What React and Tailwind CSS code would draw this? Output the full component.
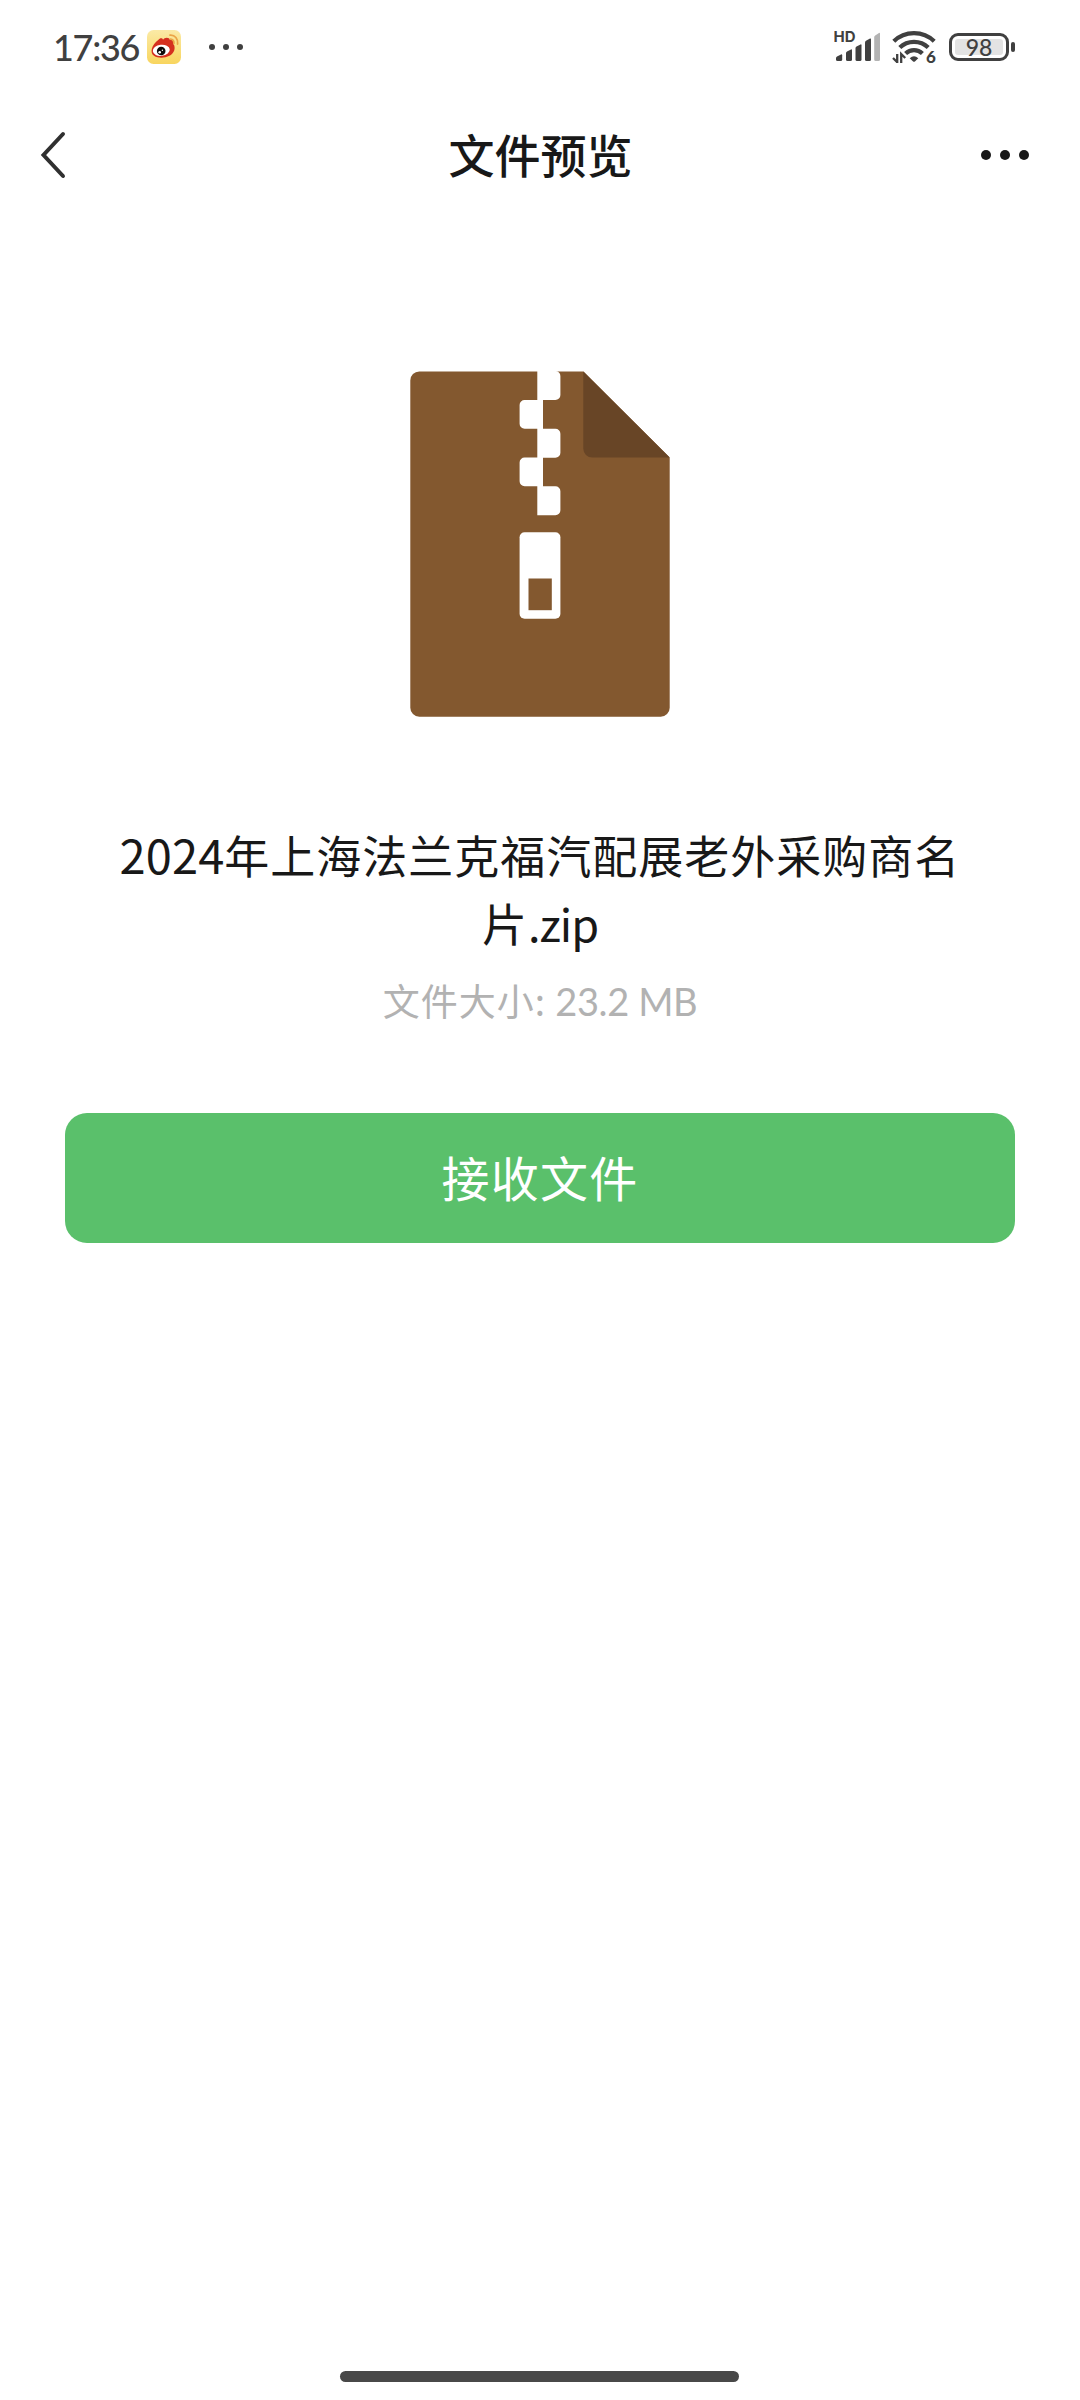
function WeiboIcon() {
  return (
    <svg className="w-[34px] h-[34px]" viewBox="0 0 34 34" fill="none">
      <defs>
        <linearGradient id="weibo-bg" x1="0" y1="0" x2="0" y2="34" gradientUnits="userSpaceOnUse">
          <stop stopColor="#fbeaa6" />
          <stop offset="1" stopColor="#f8d55e" />
        </linearGradient>
      </defs>
      <rect width="34" height="34" rx="6.5" fill="url(#weibo-bg)" />
      <path
        d="M11.5 9.8C12.5 8 15.5 7.5 16 9.8c1.5-2.8 6.5-2.8 7 .2 1.5-.5 4 .2 3.5 3-.2 1.200.4 1.700.8 2.600 1.200 4.600-1 8.200-4.800 10.200-5 2.600-11.500 2.700-15.500 0C2.500 22.800 4.500 15 11.500 9.800z"
        fill="#d5301f"
      />
      <ellipse cx="14.3" cy="20.3" rx="8.5" ry="5.6" fill="#fff" transform="rotate(-7 14.3 20.3)" />
      <circle cx="14.2" cy="21" r="4.3" fill="#0c0c0c" />
      <circle cx="12.7" cy="22.3" r="1.3" fill="#fff" />
      <circle cx="15.4" cy="20.3" r=".7" fill="#fff" />
      <path d="M23.5 9.200c2.200-.1 3.700 1.800 3.400 4.300" stroke="#eba548" strokeWidth="1.8" strokeLinecap="round" />
      <path d="M23 5.200c5-.4 8.200 3.600 7.600 8.800" stroke="#eba548" strokeWidth="1.8" strokeLinecap="round" />
    </svg>
  );
}

function SignalIcon() {
  return (
    <svg className="w-[48px] h-[50px]" viewBox="0 -8 48 50" fill="#404040">
      <text x="-.5" y="12" fontSize="14.5" fontWeight="700" textLength="22" lengthAdjust="spacingAndGlyphs" className="font-['Inter',sans-serif]">HD</text>
      <path d="M2 29.500v-1.500q0-1 1-1.600l4-2q1.200-.4 1.200.8v4.300q0 1.500-1.500 1.500H3.500q-1.500 0-1.500-1.500z" />
      <path d="M12 29.500v-6.500q0-1 1-1.600l4-2q1-.4 1 .8v9.300q0 1.500-1.500 1.500h-3q-1.500 0-1.500-1.500z" />
      <path d="M21.500 29.500V18q0-1 1-1.600l4-2q1-.4 1 .8v14.300q0 1.500-1.500 1.500h-3q-1.500 0-1.500-1.500z" />
      <path d="M31 29.500V12.400q0-1 1-1.600l4-2.300q1-.4 1 .8v20.200q0 1.500-1.500 1.500h-3q-1.500 0-1.500-1.500z" />
      <path d="M40.200 29.500V7q0-1 1-1.600l3.800-2.500q1-.4 1 .8v25.800q0 1.500-1.500 1.500h-2.800q-1.500 0-1.500-1.500z" fill="#b3b3b3" />
    </svg>
  );
}

function WifiIcon() {
  return (
    <svg className="w-[46px] h-[50px]" viewBox="0 -8 46 50" fill="none" stroke="#404040">
      <path d="M1.800 11.300C12.800.4 31.200.4 42.200 11.300" strokeWidth="4.2" />
      <path d="M7.800 17.600c7.700-7.700 20.700-7.700 28.400 0" strokeWidth="4.2" />
      <path d="M13.600 23.600c4.700-4.700 12.100-4.700 16.800 0" strokeWidth="4.2" />
      <path d="M17.700 28.200q4.300-4 8.600 0l-3.400 3.200q-.9.800-1.800 0z" fill="#404040" stroke="none" />
      <path d="M5.200 24v9M1 28l4 4M9.200 33v-9l4 4" strokeWidth="2.3" />
      <text x="34" y="32.8" fontSize="17" fontWeight="900" fill="#404040" stroke="none" className="font-['Lato',sans-serif]">6</text>
    </svg>
  );
}

function Battery({ level }) {
  return (
    <div className="flex items-center gap-[2px]">
      <div className="w-[60px] h-[28px] rounded-[9px] border-3 border-[#404040] p-[3px]">
        <div className="w-full h-full rounded-[3px] bg-[#e3e3e3] flex items-center justify-center text-[23px] leading-none font-medium text-[#404040] font-['Lato',sans-serif]">
          {level}
        </div>
      </div>
      <div className="w-[4px] h-[10px] rounded-[2px] bg-[#404040]" />
    </div>
  );
}

function StatusBar() {
  return (
    <div className="h-[94px] pl-[53px] pr-[65px] flex justify-between items-center">
      <div className="flex items-center">
        <span className="w-[94px] text-[36px] leading-none font-medium tracking-[-1.3px] text-[#404040] whitespace-nowrap font-['Lato',sans-serif]">17:36</span>
        <WeiboIcon />
        <div className="ml-[28px] flex gap-[8px]">
          <span className="size-[6px] rounded-full bg-[#404040]" />
          <span className="size-[6px] rounded-full bg-[#404040]" />
          <span className="size-[6px] rounded-full bg-[#404040]" />
        </div>
      </div>
      <div className="flex items-center">
        <SignalIcon />
        <div className="ml-[10px] mr-[11px]">
          <WifiIcon />
        </div>
        <Battery level={98} />
      </div>
    </div>
  );
}

function NavBar() {
  return (
    <div className="h-[122px] pl-[39px] pr-[51px] flex items-center justify-between">
      <svg className="w-[28px] h-[48px]" viewBox="0 0 28 48" fill="none" stroke="#303030" strokeWidth="4" strokeLinecap="round">
        <path d="M24 3 4.500 24 24 45" />
      </svg>
      <h1 className="ml-[33px] mb-[5px] text-[46px] leading-none font-medium text-[#181818]">文件预览</h1>
      <div className="flex gap-[9px]">
        <span className="size-[10px] rounded-full bg-[#181818]" />
        <span className="size-[10px] rounded-full bg-[#181818]" />
        <span className="size-[10px] rounded-full bg-[#181818]" />
      </div>
    </div>
  );
}

function ZipFileIcon() {
  return (
    <svg className="w-[260px] h-[346px]" viewBox="0 0 260 346">
      <path d="M9.300.4H173.500L259.700 86.600V336.700a9 9 0 0 1-9 9H9.300a9 9 0 0 1-9-9V9.400a9 9 0 0 1 9-9z" fill="#83582f" />
      <path d="M173.300.4 259.700 86.600H182.300a9 9 0 0 1-9-9z" fill="#684526" />
      <g fill="#fff">
        <path d="M127.300 0h18.100a5 5 0 0 1 5 5v19a5 5 0 0 1-5 5H133v28.700h12.400a5 5 0 0 1 5 5v19a5 5 0 0 1-5 5H133v28.600h12.400a5 5 0 0 1 5 5v19a5 5 0 0 1-5 5h-18.100V115.300h-12.700a5 5 0 0 1-5-5v-18.700a5 5 0 0 1 5-5h12.700V57.700h-12.700a5 5 0 0 1-5-5V34a5 5 0 0 1 5-5h12.700z" />
        <rect x="109.600" y="161.300" width="40.800" height="86.500" rx="5" />
      </g>
      <rect x="118.500" y="207.500" width="23.300" height="31.700" fill="#83582f" />
    </svg>
  );
}

export default function App() {
  return (
    <div className="w-[1080px] h-[2400px] bg-white flex flex-col overflow-hidden font-['Noto_Sans_CJK_SC',sans-serif]">
      <StatusBar />
      <NavBar />

      <main className="flex-1 flex flex-col items-center pt-[155px]">
        <ZipFileIcon />
        <p className="mt-[103px] w-[880px] text-center text-[45px] leading-[68px] tracking-[1px] text-[#181818] break-all">
          <span className="text-[47px] tracking-[0.1px]">2024</span>年上海法兰克福汽配展老外采购商名片
          <span className="tracking-[-1px]">.zip</span>
        </p>
        <p className="mt-[18px] text-[37px] leading-[50px] tracking-[1px] text-[#b2b2b2]">
          文件大小: <span className="text-[38px] tracking-[-0.4px] font-['Lato',sans-serif]">23.2 MB</span>
        </p>
        <button className="mt-[87px] w-[950px] h-[130px] pb-[5px] rounded-[22px] bg-[#5ac06b] text-white text-[48px] tracking-[1.2px]">
          接收文件
        </button>
      </main>

      <div className="ml-[340px] mb-[18px] w-[399px] h-[11px] rounded-full bg-[#484848]" />
    </div>
  );
}
